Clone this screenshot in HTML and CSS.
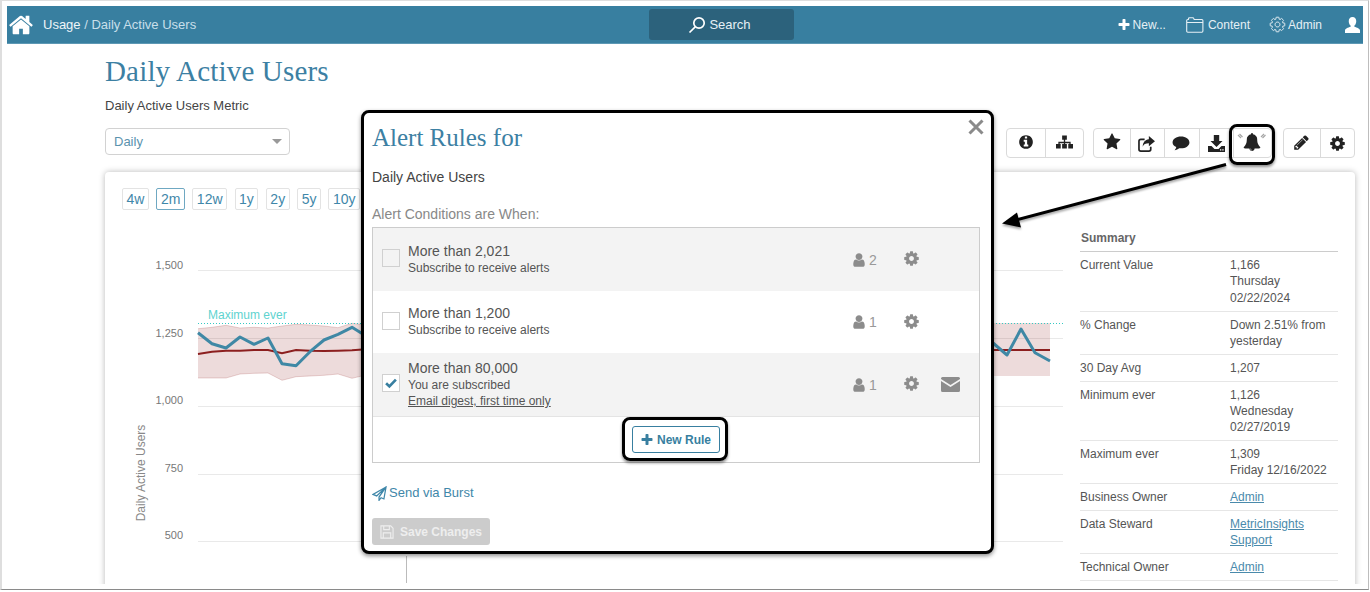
FILE: index.html
```html
<!DOCTYPE html>
<html lang="en">
<head>
<meta charset="utf-8">
<title>Daily Active Users</title>
<link rel="stylesheet" href="styles.css">
</head>
<body>
<svg class="defs" aria-hidden="true">
  <symbol id="i-home" viewBox="0 0 1792 1792"><path d="M1472 992v480q0 26-19 45t-45 19h-384v-384h-256v384h-384q-26 0-45-19t-19-45v-480q0-1 .5-3t.5-3l575-474 575 474q1 2 1 6zm223-69l-62 74q-8 9-21 11h-3q-13 0-21-7l-692-577-692 577q-12 8-24 7-13-2-21-11l-62-74q-8-10-7-23.500t11-21.500l719-599q32-26 76-26t76 26l244 204v-195q0-14 9-23t23-9h192q14 0 23 9t9 23v408l219 182q10 8 11 21.500t-7 23.500z"/></symbol>
  <symbol id="i-plus" viewBox="0 0 1792 1792"><path d="M1600 736v192q0 40-28 68t-68 28h-416v416q0 40-28 68t-68 28h-192q-40 0-68-28t-28-68v-416h-416q-40 0-68-28t-28-68v-192q0-40 28-68t68-28h416v-416q0-40 28-68t68-28h192q40 0 68 28t28 68v416h416q40 0 68 28t28 68z"/></symbol>
  <symbol id="i-cog" viewBox="0 0 1792 1792"><path d="M1152 896q0-106-75-181t-181-75-181 75-75 181 75 181 181 75 181-75 75-181zm512-109v222q0 12-8 23t-20 13l-185 28q-19 54-39 91 35 50 107 138 10 12 10 25t-9 23q-27 37-99 108t-94 71q-12 0-26-9l-138-108q-44 23-91 38-16 136-29 186-7 28-36 28h-222q-14 0-24.500-8.500t-11.500-21.500l-28-184q-49-16-90-37l-141 107q-10 9-25 9-14 0-25-11-126-114-165-168-7-10-7-23 0-12 8-23 15-21 51-66.500t54-70.500q-27-50-41-99l-183-27q-13-2-21-12.500t-8-23.500v-222q0-12 8-23t19-13l186-28q14-46 39-92-40-57-107-138-10-12-10-24 0-10 9-23 26-36 98.500-107.500t94.500-71.500q13 0 26 10l138 107q44-23 91-38 16-136 29-186 7-28 36-28h222q14 0 24.500 8.500t11.500 21.500l28 184q49 16 90 37l142-107q9-9 24-9 13 0 25 10 129 119 165 170 7 8 7 22 0 12-8 23-15 21-51 66.500t-54 70.500q26 50 41 98l183 28q13 2 21 12.500t8 23.500z"/></symbol>
  <symbol id="i-star" viewBox="0 0 1792 1792"><path d="M1728 647q0 22-26 48l-363 354 86 500q1 7 1 20 0 21-10.500 35.500t-30.500 14.500q-19 0-40-12l-449-236-449 236q-22 12-40 12-21 0-31.500-14.500t-10.500-35.500q0-6 2-20l86-500-364-354q-25-27-25-48 0-37 56-46l502-73 225-455q19-41 49-41t49 41l225 455 502 73q56 9 56 46z"/></symbol>
  <symbol id="i-info" viewBox="0 0 1792 1792"><path d="M1152 1376v-160q0-14-9-23t-23-9h-96v-512q0-14-9-23t-23-9h-320q-14 0-23 9t-9 23v160q0 14 9 23t23 9h96v320h-96q-14 0-23 9t-9 23v160q0 14 9 23t23 9h448q14 0 23-9t9-23zm-128-896v-160q0-14-9-23t-23-9h-192q-14 0-23 9t-9 23v160q0 14 9 23t23 9h192q14 0 23-9t9-23zm640 416q0 209-103 385.500t-279.500 279.500-385.500 103-385.500-103-279.500-279.500-103-385.500 103-385.500 279.500-279.500 385.500-103 385.500 103 279.500 279.500 103 385.500z"/></symbol>
  <symbol id="i-bell" viewBox="0 0 1792 1792"><path d="M912 1696q0-16-16-16-59 0-101.500-42.500t-42.500-101.500q0-16-16-16t-16 16q0 73 51.500 124.500t124.500 51.500q16 0 16-16zm816-288q0 52-38 90t-90 38h-448q0 106-75 181t-181 75-181-75-75-181h-448q-52 0-90-38t-38-90q50-42 91-88t85-119.500 74.500-158.500 50-206 19.500-260q0-152 117-282.500t307-158.500q-8-19-8-39 0-40 28-68t68-28 68 28 28 68q0 20-8 39 190 28 307 158.500t117 282.500q0 139 19.500 260t50 206 74.500 158.500 85 119.500 91 88z"/></symbol>
  <symbol id="i-pencil" viewBox="0 0 1792 1792"><path d="M491 1536l91-91-235-235-91 91v107h128v128h107zm523-928q0-22-22-22-10 0-17 7l-542 542q-7 7-7 17 0 22 22 22 10 0 17-7l542-542q7-7 7-17zm-54-192l416 416-832 832h-416v-416zm683 96q0 53-37 90l-166 166-416-416 166-165q36-38 90-38 53 0 91 38l235 234q37 39 37 91z"/></symbol>
  <symbol id="i-user" viewBox="0 0 1792 1792"><path d="M1536 1399q0 109-62.500 187t-150.500 78h-854q-88 0-150.500-78t-62.500-187q0-85 8.500-160.500t31.500-152 58.500-131 94-89 134.500-34.500q131 128 313 128t313-128q76 0 134.500 34.500t94 89 58.500 131 31.500 152 8.500 160.500zm-256-887q0 159-112.500 271.500t-271.500 112.500-271.500-112.500-112.500-271.500 112.500-271.500 271.500-112.500 271.500 112.500 112.500 271.500z"/></symbol>
  <symbol id="i-sitemap" viewBox="0 0 18 14"><path d="M6.500 0h5v4.500h-5zM8.300 4.500h1.400v2.300h5.800v2.500h-1.400v-1.100h-4.400v1.100h-1.400v-1.100h-4.400v1.100h-1.400v-2.500h5.800zM0 9h5v5h-5zM6.500 9h5v5h-5zM13 9h5v5h-5z"/></symbol>
  <symbol id="i-comment" viewBox="0 0 18 16"><path d="M9 .5c5 0 9 2.800 9 6.300s-4 6.300-9 6.300c-.7 0-1.300 0-2-.1-1.300 1.100-3 1.800-4.800 2.100 .9-1 1.500-2 1.800-3.300-2.400-1.100-4-2.900-4-5 0-3.500 4-6.300 9-6.300z"/></symbol>
  <symbol id="i-download" viewBox="0 0 17 17"><path d="M5.800 0h5.400v6h3.300l-6 6-6-6h3.300zM0 11h3.500l3 3h4l3-3h3.500v6h-17z"/><path class="dl-dot" d="M12 14.300h1.300v1.300h-1.300zM14.300 14.300h1.300v1.300h-1.300z"/></symbol>
  <symbol id="i-share" viewBox="0 0 18 17"><path class="sh-box" d="M7 3.500h-4q-2 0-2 2v8.500q0 2 2 2h8.500q2 0 2-2v-2.500"/><path d="M11.500 0l6.500 5.500-6.500 5.500v-3.200c-3.500 0-5.500 1-6.500 3.700 0-4.500 2.500-7.600 6.500-8z"/></symbol>
</svg>

<div class="frame">
  <header class="topbar">
    <div class="crumbs">
      <svg class="ic-home"><use href="#i-home"/></svg>
      <span class="crumb-strong">Usage</span><span class="crumb-rest">&nbsp;/ Daily Active Users</span>
    </div>
    <div class="search">
      <svg class="ic-search" viewBox="0 0 18 18"><circle cx="11" cy="7" r="5.200"/><path d="M7.200 10.800l-5.700 5.700"/></svg>
      <span>Search</span>
    </div>
    <nav class="topnav">
      <span class="nav-item nav-new"><svg class="ic-plus"><use href="#i-plus"/></svg><span>New...</span></span>
      <span class="nav-item nav-content"><svg class="ic-folder" viewBox="0 0 18 16"><path d="M2.500 2.500v-.7q0-1.100 1.100-1.100h3q1 0 1.300 1l.3.800h7.600q1.100 0 1.100 1.100v10.500q0 1.100-1.100 1.100h-14q-1.100 0-1.100-1.100v-10.500q0-1.100 1.100-1.100h1.100zM.7 5.500h16.600"/></svg><span>Content</span></span>
      <span class="nav-item nav-admin"><svg class="ic-gear-o"><use href="#i-cog"/></svg><span>Admin</span></span>
      <svg class="ic-person" viewBox="0 0 16 17"><path d="M8 0c2.600 0 4 1.800 4 4.400 0 2-.8 3.800-2 4.700v1.200c2.800.8 6 1.900 6 4v2.700h-16v-2.700c0-2.100 3.200-3.200 6-4v-1.200c-1.200-.9-2-2.700-2-4.700 0-2.600 1.400-4.400 4-4.400z"/></svg>
    </nav>
  </header>

  <main class="main">
    <h1 class="page-title">Daily Active Users</h1>
    <p class="page-sub">Daily Active Users Metric</p>
    <div class="controls">
      <div class="select"><span>Daily</span><i class="caret"></i></div>
      <div class="toolbar">
        <div class="tgroup tg-a">
          <span class="tcell"><svg class="ti"><use href="#i-info"/></svg></span>
          <span class="tcell"><svg class="ti-map"><use href="#i-sitemap"/></svg></span>
        </div>
        <div class="tgroup tg-b">
          <span class="tcell"><svg class="ti-star"><use href="#i-star"/></svg></span>
          <span class="tcell"><svg class="ti-share"><use href="#i-share"/></svg></span>
          <span class="tcell"><svg class="ti-comment"><use href="#i-comment"/></svg></span>
          <span class="tcell"><svg class="ti-dl"><use href="#i-download"/></svg></span>
          <span class="tcell"><svg class="ti-bell" viewBox="0 0 30 22"><path class="ray" d="M1 4l3 3M2.500 3l3 3M24 6l3-3M25.500 7l3-3"/><use href="#i-bell" x="6" y="2" width="18" height="18"/></svg></span>
        </div>
        <div class="tgroup tg-c">
          <span class="tcell"><svg class="ti-pen"><use href="#i-pencil"/></svg></span>
          <span class="tcell"><svg class="ti-cog"><use href="#i-cog"/></svg></span>
        </div>
      </div>
    </div>

    <section class="card">
      <div class="chart-col">
        <div class="ranges">
          <span class="range">4w</span>
          <span class="range is-active">2m</span>
          <span class="range">12w</span>
          <span class="range">1y</span>
          <span class="range">2y</span>
          <span class="range">5y</span>
          <span class="range">10y</span>
        </div>
        <svg class="chart" viewBox="105 217 975 370">
          <g class="grid">
            <path d="M198 270.500H1063M198 338.500H1063M198 406.500H1063M198 474.500H1063M198 541.500H1063"/>
          </g>
          <path class="axis" d="M406.500 556V583"/>
          <g class="ylabels">
            <text x="183" y="269">1,500</text>
            <text x="183" y="337">1,250</text>
            <text x="183" y="404">1,000</text>
            <text x="183" y="472">750</text>
            <text x="183" y="539">500</text>
          </g>
          <text class="ytitle" transform="translate(145 473) rotate(-90)">Daily Active Users</text>
          <text class="maxlabel" x="208" y="319">Maximum ever</text>
          <path class="band" d="M198 328.700L212 327.300 226 325.300 240 328 254 327.300 268 328 282 326 296 324.300 310 325 324 326 338 327.700 352 323.300 366 325 993 323 1050 323V376L993 376 366 375 352 378.300 338 374 324 375.300 310 376 296 376.700 282 380.300 268 373 254 373.300 240 374 226 378 212 378 198 378Z"/>
          <path class="band-edge" d="M198 328.700L212 327.300 226 325.300 240 328 254 327.300 268 328 282 326 296 324.300 310 325 324 326 338 327.700 352 323.300 366 325M198 378L212 378 226 378 240 374 254 373.300 268 373 282 380.300 296 376.700 310 376 324 375.300 338 374 352 378.300 366 375"/>
          <path class="maxline" d="M198 323.500H1063"/>
          <path class="avg" d="M198 354L212 351.700 226 350.700 240 350.700 254 350 268 350 282 353.300 296 350 310 350.700 324 351 338 350.700 352 350.300 366 349.300 993 350 1050 350"/>
          <path class="val" d="M198 332.700L212 343.700 226 348 240 337 254 344.300 268 338 282 363.700 296 365.700 310 351.700 324 340 338 334.300 352 327.300 366 336"/>
          <path class="val" d="M993 343L1007 355 1021 329 1035 352.700 1050 361"/>
        </svg>
      </div>
      <div class="summary">
        <div class="sum-head">Summary</div>
        <div class="sum-row"><span>Current Value</span><span>1,166<br>Thursday<br>02/22/2024</span></div>
        <div class="sum-row"><span>% Change</span><span>Down 2.51% from yesterday</span></div>
        <div class="sum-row"><span>30 Day Avg</span><span>1,207</span></div>
        <div class="sum-row"><span>Minimum ever</span><span>1,126<br>Wednesday<br>02/27/2019</span></div>
        <div class="sum-row"><span>Maximum ever</span><span>1,309<br>Friday 12/16/2022</span></div>
        <div class="sum-row"><span>Business Owner</span><span><a href="#">Admin</a></span></div>
        <div class="sum-row"><span>Data Steward</span><span><a href="#">MetricInsights Support</a></span></div>
        <div class="sum-row"><span>Technical Owner</span><span><a href="#">Admin</a></span></div>
      </div>
    </section>
  </main>
</div>

<section class="modal">
  <span class="close">
    <svg viewBox="0 0 16 16"><path d="M1.500 1.500l13 13M14.500 1.500l-13 13"/></svg>
  </span>
  <h2 class="modal-title">Alert Rules for</h2>
  <p class="modal-name">Daily Active Users</p>
  <p class="modal-label">Alert Conditions are When:</p>
  <div class="rules">
    <div class="rule rule-shade">
      <span class="check"></span>
      <div class="rule-text"><div class="rule-title">More than 2,021</div><div class="rule-sub">Subscribe to receive alerts</div></div>
      <span class="rule-count"><svg class="ri-user"><use href="#i-user"/></svg>2</span>
      <span class="rule-gear"><svg class="ri-cog"><use href="#i-cog"/></svg></span>
      <span class="rule-mail"></span>
    </div>
    <div class="rule">
      <span class="check"></span>
      <div class="rule-text"><div class="rule-title">More than 1,200</div><div class="rule-sub">Subscribe to receive alerts</div></div>
      <span class="rule-count"><svg class="ri-user"><use href="#i-user"/></svg>1</span>
      <span class="rule-gear"><svg class="ri-cog"><use href="#i-cog"/></svg></span>
      <span class="rule-mail"></span>
    </div>
    <div class="rule rule-shade">
      <span class="check"><svg viewBox="0 0 18 18"><path d="M3.500 9.200l3.700 3.600 7.300-7.600"/></svg></span>
      <div class="rule-text"><div class="rule-title">More than 80,000</div><div class="rule-sub">You are subscribed</div><div class="rule-sub rule-link">Email digest, first time only</div></div>
      <span class="rule-count"><svg class="ri-user"><use href="#i-user"/></svg>1</span>
      <span class="rule-gear"><svg class="ri-cog"><use href="#i-cog"/></svg></span>
      <span class="rule-mail"><svg class="ri-mail" viewBox="0 0 19 15"><path d="M1.500 0h16q1.500 0 1.500 1.500v.5l-9.500 6-9.500-6v-.5q0-1.500 1.500-1.500zM0 4l9.500 6 9.500-6v9.500q0 1.500-1.500 1.500h-16q-1.500 0-1.500-1.500z"/></svg></span>
    </div>
    <div class="rules-foot">
      <button class="new-rule" type="button"><svg class="ic-newplus"><use href="#i-plus"/></svg>New Rule</button>
    </div>
  </div>
  <div class="burst">
    <svg viewBox="0 0 16 16"><path d="M15 1l-14 8 4 1.600 10-9.600-7.500 10.800v3.500l2.200-2.800 3 1.300z"/></svg>
    <span>Send via Burst</span>
  </div>
  <button class="save" type="button">
    <svg viewBox="0 0 15 15"><path d="M1 1h10.500l2.500 2.500v10.500h-13zM4 1v4h6v-4M3.500 14v-5.500h8v5.500"/></svg>
    Save Changes
  </button>
</section>

<div class="mark mark-bell"></div>
<div class="mark mark-rule"></div>
<svg class="arrow" viewBox="995 155 240 80">
  <path class="arrow-line" d="M1226 164.500L1012 221"/>
  <path class="arrow-head" d="M1002 223.500L1017 212.500 1021 227.500Z"/>
</svg>
</body>
</html>
```

FILE: styles.css
```css
* { box-sizing: border-box; }
html, body { margin: 0; height: 592px; overflow: hidden; background: #fff; }
body { font-family: "Liberation Sans", Arial, sans-serif; font-size: 13px; color: #444; position: relative; }
.defs { display: none; }
svg { display: block; fill: currentColor; }

.frame {
  width: 1369px; height: 590px;
  border: 1px solid #dedede; border-bottom-color: #8a8a8a; border-right-color: #bdbdbd; border-left-width: 2px;
  padding: 5px 5px 0 5px;
  overflow: hidden;
}

.topbar {
  display: flex; align-items: flex-start;
  height: 38px; background: #387fa0; color: #fff;
  border-bottom: 1px solid #5d98b4;
}
.crumbs { flex: 0 0 642px; display: flex; align-items: center; height: 37px; font-size: 13px; padding-left: 1px; }
.ic-home { width: 26px; height: 26px; margin-right: 9px; color: #fff; flex: none; }
.crumb-strong { color: #eef5f8; }
.crumb-rest { color: #c8dfea; }
.search {
  flex: 0 0 145px; height: 31px; margin-top: 3px; padding-right: 4px;
  display: flex; align-items: center; justify-content: center; gap: 3px;
  background: #2c627c; border-radius: 3px; color: #e6f0f5; font-size: 13px;
}
.ic-search { width: 18px; height: 18px; fill: none; stroke: #fff; stroke-width: 1.700; }
.topnav { flex: 1; display: flex; justify-content: flex-end; align-items: center; height: 37px; font-size: 12px; color: #e6f0f5; padding-right: 3px; }
.nav-item { display: flex; align-items: center; }
.ic-plus { width: 14px; height: 14px; color: #fff; margin-right: 2px; }
.ic-folder { width: 18px; height: 16px; fill: none; stroke: #e6f0f5; stroke-width: 1.100; margin-right: 4px; }
.ic-gear-o { width: 17px; height: 17px; fill: none; stroke: #fff; stroke-width: 90; margin-right: 2px; }
.nav-new { margin-right: 20px; }
.nav-content { margin-right: 19px; }
.nav-admin { margin-right: 23px; }
.ic-person { width: 15px; height: 16px; color: #fff; }

.main { height: 540px; overflow: hidden; padding: 9px 8px 0 98px; }
.page-title { margin: 0; font: 400 29px/36px "Liberation Serif", serif; letter-spacing: .17px; color: #3c80a3; }
.page-sub { margin: 9px 0 0; font-size: 13px; line-height: 16px; color: #444; }
.controls { display: flex; justify-content: space-between; align-items: flex-start; height: 44px; margin-top: 14px; }
.select {
  width: 185px; height: 27px; display: flex; align-items: center; justify-content: space-between;
  padding: 0 7px 0 8px; border: 1px solid #d2d2d2; border-radius: 4px; color: #5b93ae; font-size: 13px;
}
.caret { width: 0; height: 0; border-left: 5px solid transparent; border-right: 5px solid transparent; border-top: 5px solid #999; }
.toolbar { display: flex; }
.tgroup { display: grid; height: 30px; border: 1px solid #dadada; border-radius: 4px; color: #222; }
.tg-a { grid-template-columns: 38px 38px; width: 78px; margin-right: 9px; }
.tg-b { grid-template-columns: 36px 34px 35px 34px 40px; width: 179px; margin-right: 11px; }
.tg-c { grid-template-columns: 36px 34px; width: 72px; }
.tcell { display: flex; align-items: center; justify-content: center; border-left: 1px solid #dadada; }
.tcell:first-child { border-left: 0; }
.ti { width: 16px; height: 16px; margin-top: -2px; }
.ti-map { width: 17px; height: 14px; margin-top: -2px; }
.ti-star { width: 18px; height: 18px; margin: -2px 1px 0 0; }
.ti-share { width: 17px; height: 16px; margin: 1px 3px 0 0; }
.sh-box { fill: none; stroke: currentColor; stroke-width: 1.800; }
.ti-comment { width: 18px; height: 15px; margin-right: 2px; }
.ti-dl { width: 17px; height: 17px; margin: 1px 1px 0 0; }
.dl-dot { fill: #fff; }
.ti-bell { width: 30px; height: 22px; margin: -2px 4px 0 0; }
.ray { fill: none; stroke: #a5a5a5; stroke-width: 1.200; }
.ti-pen { width: 17px; height: 17px; margin: -1px 1px 0 0; }
.ti-cog { width: 17px; height: 17px; }

.card {
  display: flex; height: 430px; border-radius: 4px; background: #fff;
  box-shadow: 0 0 6px rgba(0,0,0,.28);
}
.chart-col { flex: 0 0 975px; }
.ranges { display: flex; gap: 7.500px; padding: 16px 0 0 17px; height: 45px; }
.range {
  height: 22px; padding: 0 3.500px; border: 1px solid #e3e3e3; border-radius: 2px;
  font-size: 14px; line-height: 20px; color: #3f87a9;
}
.range.is-active { border-color: #6fa8c2; }
.chart { width: 975px; height: 370px; }
.grid path { stroke: #e9e9e9; stroke-width: 1; fill: none; }
.axis { stroke: #bbb; fill: none; }
.ylabels text { font-size: 11px; fill: #777; text-anchor: end; }
.ytitle { font-size: 12px; fill: #888; text-anchor: middle; }
.maxlabel { font-size: 12px; fill: #5ed3cf; }
.maxline { stroke: #35c9c3; stroke-dasharray: 1 2; fill: none; }
.band { fill: rgba(150,40,40,.17); }
.band-edge { fill: none; stroke: rgba(150,40,40,.2); stroke-width: 1; }
.avg { fill: none; stroke: #8c1f1f; stroke-width: 2; }
.val { fill: none; stroke: #3f88a5; stroke-width: 3; stroke-linejoin: round; }

.summary { flex: 0 0 258px; padding-top: 58px; font-size: 12px; line-height: 16.350px; color: #555; }
.sum-head { font-weight: 700; line-height: 16px; padding: 0 0 5px 1px; border-bottom: 1px solid #ccc; color: #666; }
.sum-row { display: grid; grid-template-columns: 150px 1fr; padding: 5px 0 4.500px; border-bottom: 1px solid #e6e6e6; }
.sum-row a { color: #4a8aab; }

.modal {
  position: absolute; left: 361px; top: 110px; width: 633px; height: 444px;
  padding: 10px 10px 0 8px; background: #fff;
  border: 3px solid #000; border-radius: 8px;
  box-shadow: 0 2px 4px rgba(0,0,0,.45);
}
.close { position: absolute; right: 7px; top: 6px; width: 16px; height: 16px; }
.close svg { fill: none; stroke: #8a8a8a; stroke-width: 3; }
.modal-title { margin: 0; font: 400 25px/30px "Liberation Serif", serif; color: #3c80a3; }
.modal-name { margin: 16px 0 0; font-size: 14px; line-height: 16px; color: #444; }
.modal-label { margin: 21px 0 5px; font-size: 14px; line-height: 16px; color: #888; }
.rules { width: 608px; height: 236px; border: 1px solid #ccc; }
.rule { display: flex; align-items: center; height: 62px; }
.rule-shade { height: 63px; background: #f3f3f3; }
.check {
  flex: none; width: 18px; height: 18px; margin: 0 8px 3px 9px;
  background: #fff; border: 1px solid #d0d0d0;
}
.rule-shade .check { background: #f3f3f3; }
.rule-shade .check:has(svg) { background: #fff; }
.check svg { width: 16px; height: 16px; fill: none; stroke: #387fa0; stroke-width: 3; }
.rule-text { flex: 1; color: #555; }
.rule-title { font-size: 14px; line-height: 17px; }
.rule-sub { font-size: 12px; line-height: 16.500px; }
.rule-link { text-decoration: underline; }
.rule-count { flex: 0 0 51px; display: flex; align-items: center; gap: 2px; font-size: 14px; color: #999; }
.ri-user { width: 16px; height: 16px; color: #8c8c8c; margin-left: -2px; }
.rule-gear { flex: 0 0 37px; }
.ri-cog { width: 17px; height: 17px; color: #8c8c8c; margin: -2px 0 0 -1px; }
.rule-mail { flex: 0 0 38px; }
.ri-mail { width: 19px; height: 15px; color: #8c8c8c; }
.rules-foot { height: 46px; border-top: 1px solid #e4e4e4; display: flex; justify-content: center; padding: 9px 0 0 0; }
.new-rule {
  display: flex; align-items: center; justify-content: center; gap: 3px;
  width: 88px; height: 27px; margin-right: 1px; padding: 0; background: #fff;
  border: 1px solid #387fa0; border-radius: 3px;
  font: 700 12px "Liberation Sans", Arial, sans-serif; color: #387fa0;
}
.ic-newplus { width: 14px; height: 14px; }
.burst { display: flex; align-items: center; gap: 2px; margin-top: 22px; font-size: 13px; line-height: 16px; color: #3f87a9; }
.burst svg { width: 15px; height: 15px; fill: none; stroke: #3f87a9; stroke-width: 1.300; }
.save {
  display: flex; align-items: center; gap: 6px; width: 118px; height: 27px; margin-top: 17px;
  padding: 0 0 0 8px; background: #ccc; border: 0; border-radius: 3px;
  font: 700 12px "Liberation Sans", Arial, sans-serif; color: #eee;
}
.save svg { width: 14px; height: 14px; fill: none; stroke: #eee; stroke-width: 1.200; }

.mark { position: absolute; border: 3px solid #000; border-radius: 8px; box-shadow: 0 2px 3px rgba(0,0,0,.45); }
.mark-bell { left: 1229px; top: 124px; width: 46px; height: 41px; }
.mark-rule { left: 622px; top: 417px; width: 106px; height: 44px; }
.arrow { position: absolute; left: 995px; top: 155px; width: 240px; height: 80px; filter: drop-shadow(0 2px 1px rgba(0,0,0,.35)); }
.arrow-line { stroke: #000; stroke-width: 3; fill: none; }
.arrow-head { fill: #000; }
```
